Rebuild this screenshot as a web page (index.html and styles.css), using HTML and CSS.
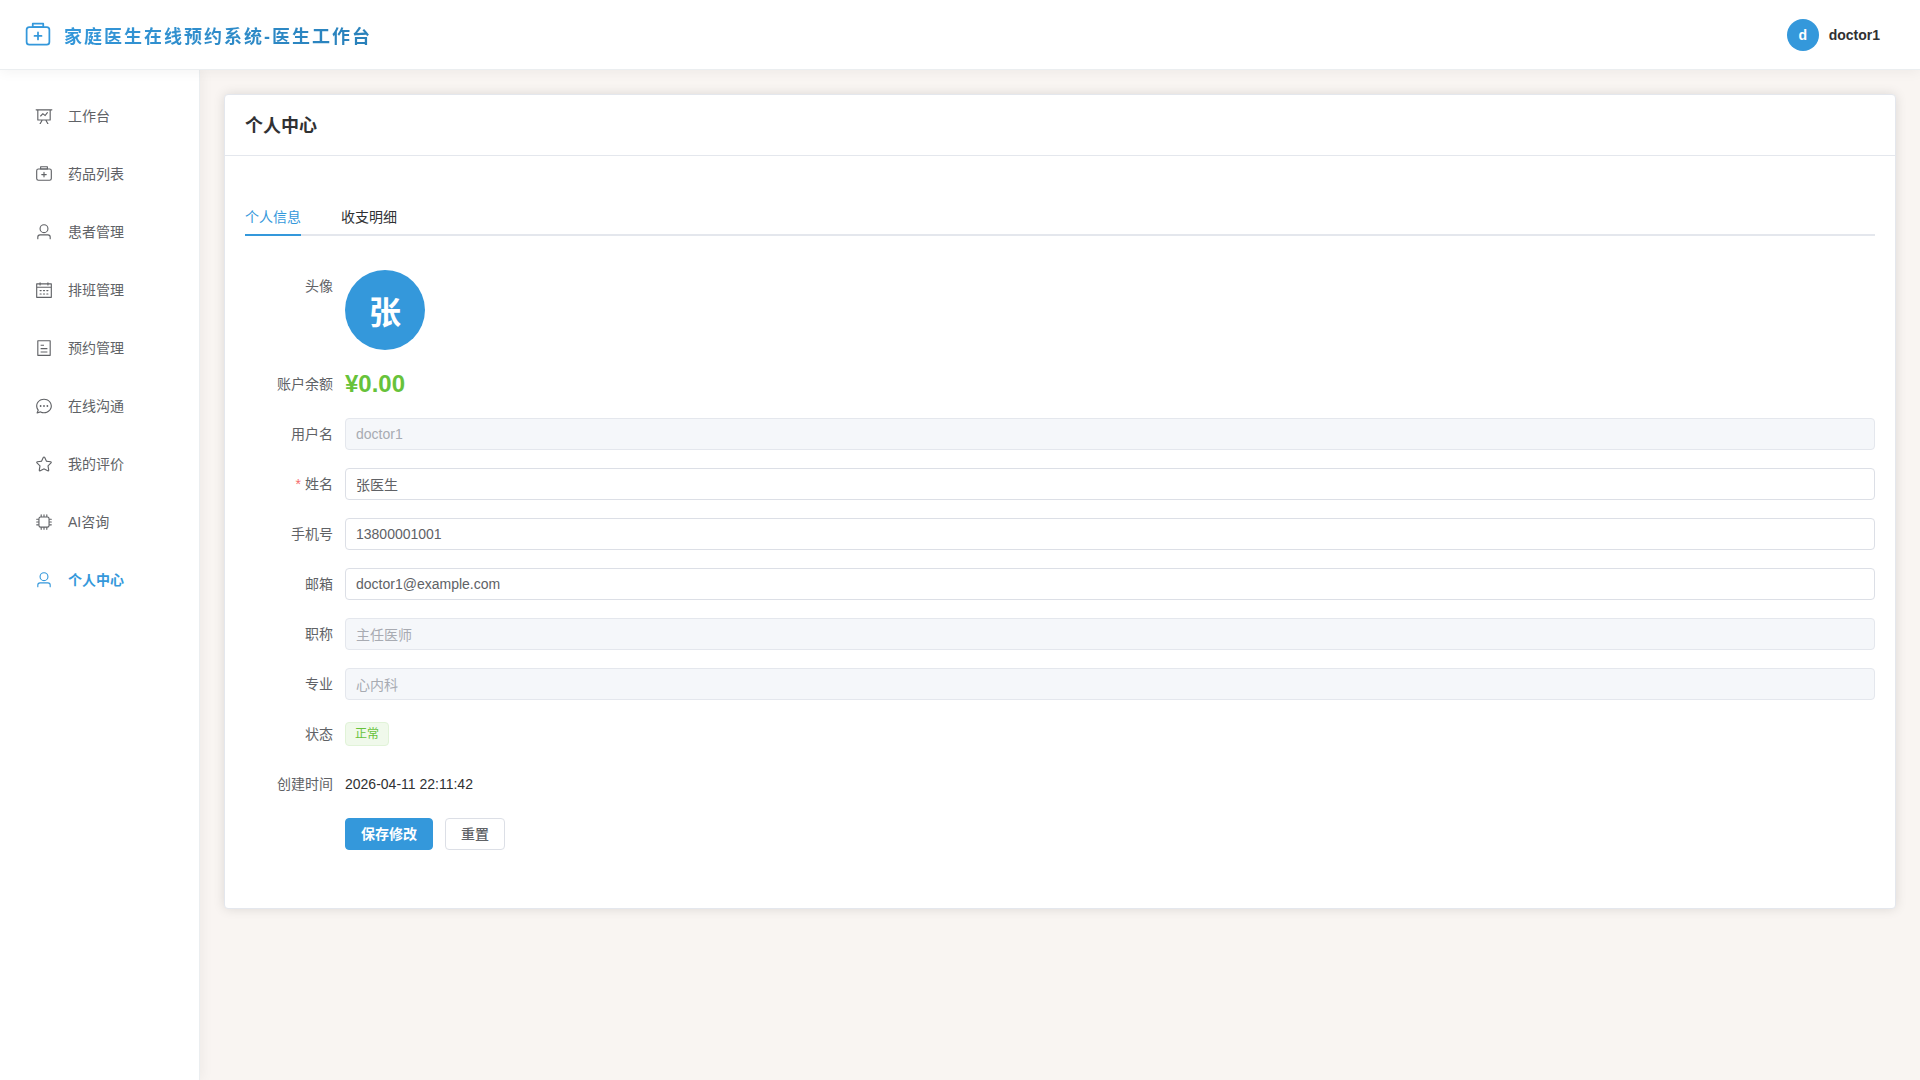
FILE: index.html
```html
<!DOCTYPE html>
<html lang="zh-CN">
<head>
<meta charset="utf-8">
<meta name="viewport" content="width=device-width, initial-scale=1">
<title>家庭医生在线预约系统-医生工作台</title>
<link rel="stylesheet" href="styles.css">
</head>
<body>
<svg class="sprite" aria-hidden="true">
  <symbol id="kit" viewBox="0 0 1024 1024"><path d="M192 256a64 64 0 0 0-64 64v448a64 64 0 0 0 64 64h640a64 64 0 0 0 64-64V320a64 64 0 0 0-64-64zm0-64h640a128 128 0 0 1 128 128v448a128 128 0 0 1-128 128H192A128 128 0 0 1 64 768V320a128 128 0 0 1 128-128"/><path d="M544 512h96a32 32 0 0 1 0 64h-96v96a32 32 0 0 1-64 0v-96h-96a32 32 0 0 1 0-64h96v-96a32 32 0 0 1 64 0zM352 128v64h320v-64zm-32-64h384a32 32 0 0 1 32 32v128a32 32 0 0 1-32 32H320a32 32 0 0 1-32-32V96a32 32 0 0 1 32-32"/></symbol>
  <symbol id="board" viewBox="0 0 1024 1024"><path d="M359.168 768H160a32 32 0 0 1-32-32V192H64a32 32 0 0 1 0-64h896a32 32 0 1 1 0 64h-64v544a32 32 0 0 1-32 32H665.216l110.848 192h-73.856L591.36 768H433.024L322.176 960H248.32zM832 192H192v512h640zM342.656 534.656a32 32 0 1 1-45.312-45.312L444.992 341.76l125.44 94.08L679.04 300.032a32 32 0 1 1 49.92 39.936L581.632 524.224 451.008 426.24 342.656 534.592z"/></symbol>
  <symbol id="user" viewBox="0 0 1024 1024"><path d="M512 512a192 192 0 1 0 0-384 192 192 0 0 0 0 384m0 64a256 256 0 1 1 0-512 256 256 0 0 1 0 512m320 320v-96a96 96 0 0 0-96-96H288a96 96 0 0 0-96 96v96a32 32 0 1 1-64 0v-96a160 160 0 0 1 160-160h448a160 160 0 0 1 160 160v96a32 32 0 1 1-64 0"/></symbol>
  <symbol id="calendar" viewBox="0 0 1024 1024"><path d="M128 384v512h768V192H768v32a32 32 0 1 1-64 0v-32H320v32a32 32 0 0 1-64 0v-32H128v128h768v64zm192-256h384V96a32 32 0 1 1 64 0v32h160a32 32 0 0 1 32 32v768a32 32 0 0 1-32 32H96a32 32 0 0 1-32-32V160a32 32 0 0 1 32-32h160V96a32 32 0 0 1 64 0zm-32 384h64a32 32 0 0 1 0 64h-64a32 32 0 0 1 0-64m0 192h64a32 32 0 1 1 0 64h-64a32 32 0 1 1 0-64m192-192h64a32 32 0 0 1 0 64h-64a32 32 0 0 1 0-64m0 192h64a32 32 0 1 1 0 64h-64a32 32 0 1 1 0-64m192-192h64a32 32 0 1 1 0 64h-64a32 32 0 1 1 0-64m0 192h64a32 32 0 1 1 0 64h-64a32 32 0 1 1 0-64"/></symbol>
  <symbol id="ticket" viewBox="0 0 1024 1024"><path d="M192 128v768h640V128zm-32-64h704a32 32 0 0 1 32 32v832a32 32 0 0 1-32 32H160a32 32 0 0 1-32-32V96a32 32 0 0 1 32-32m160 448h384v64H320zm0-192h192v64H320zm0 384h384v64H320z"/></symbol>
  <symbol id="chat" viewBox="0 0 1024 1024"><path d="m174.72 855.68 135.296-45.12 23.68 11.84C388.096 849.536 448.576 864 512 864c211.84 0 384-166.784 384-352S723.84 160 512 160 128 326.784 128 512c0 69.12 24.96 139.264 70.848 199.232l22.08 28.8-46.272 115.584zm-45.248 82.56A32 32 0 0 1 89.6 896l58.368-145.92C94.72 680.32 64 596.864 64 512 64 299.904 256 96 512 96s448 203.904 448 416-192 416-448 416a461.06 461.06 0 0 1-206.912-48.384l-175.616 58.56z"/><path d="M512 563.2a51.2 51.2 0 1 1 0-102.4 51.2 51.2 0 0 1 0 102.4m192 0a51.2 51.2 0 1 1 0-102.4 51.2 51.2 0 0 1 0 102.4m-384 0a51.2 51.2 0 1 1 0-102.4 51.2 51.2 0 0 1 0 102.4"/></symbol>
  <symbol id="star" viewBox="0 0 1024 1024"><path d="m512 747.84 228.16 119.936a6.4 6.4 0 0 0 9.28-6.72l-43.52-254.08 184.512-179.904a6.4 6.4 0 0 0-3.52-10.88l-255.104-37.12L517.76 147.904a6.4 6.4 0 0 0-11.52 0L392.192 379.072l-255.104 37.12a6.4 6.4 0 0 0-3.52 10.88L318.08 606.976l-43.584 254.08a6.4 6.4 0 0 0 9.28 6.72zM313.6 924.48a70.4 70.4 0 0 1-102.144-74.24l37.888-220.928L88.96 472.96A70.4 70.4 0 0 1 128 352.896l221.76-32.256 99.2-200.96a70.4 70.4 0 0 1 126.208 0l99.2 200.96 221.824 32.256a70.4 70.4 0 0 1 39.04 120.064L774.72 629.376l37.888 220.928a70.4 70.4 0 0 1-102.144 74.24L512 820.096l-198.4 104.32z"/></symbol>
  <symbol id="cpu" viewBox="0 0 1024 1024"><path d="M320 256a64 64 0 0 0-64 64v384a64 64 0 0 0 64 64h384a64 64 0 0 0 64-64V320a64 64 0 0 0-64-64zm0-64h384a128 128 0 0 1 128 128v384a128 128 0 0 1-128 128H320a128 128 0 0 1-128-128V320a128 128 0 0 1 128-128"/><path fill="none" stroke="currentColor" stroke-width="64" stroke-linecap="round" d="M512 96v96M352 96v96M672 96v96M512 928v-96M352 928v-96M672 928v-96M96 512h96M96 352h96M96 672h96M928 512h-96M928 352h-96M928 672h-96"/></symbol>
</svg>

<header class="topbar">
  <div class="brand">
    <svg class="brand-icon" aria-hidden="true"><use href="#kit"/></svg>
    <span class="brand-name">家庭医生在线预约系统-医生工作台</span>
  </div>
  <button class="account" type="button">
    <span class="avatar avatar-small">d</span>
    <span>doctor1</span>
  </button>
</header>

<div class="shell">
  <nav class="sidebar">
    <a class="nav-item" href="#"><svg class="nav-icon" aria-hidden="true"><use href="#board"/></svg>工作台</a>
    <a class="nav-item" href="#"><svg class="nav-icon" aria-hidden="true"><use href="#kit"/></svg>药品列表</a>
    <a class="nav-item" href="#"><svg class="nav-icon" aria-hidden="true"><use href="#user"/></svg>患者管理</a>
    <a class="nav-item" href="#"><svg class="nav-icon" aria-hidden="true"><use href="#calendar"/></svg>排班管理</a>
    <a class="nav-item" href="#"><svg class="nav-icon" aria-hidden="true"><use href="#ticket"/></svg>预约管理</a>
    <a class="nav-item" href="#"><svg class="nav-icon" aria-hidden="true"><use href="#chat"/></svg>在线沟通</a>
    <a class="nav-item" href="#"><svg class="nav-icon" aria-hidden="true"><use href="#star"/></svg>我的评价</a>
    <a class="nav-item" href="#"><svg class="nav-icon" aria-hidden="true"><use href="#cpu"/></svg>AI咨询</a>
    <a class="nav-item is-active" href="#" aria-current="page"><svg class="nav-icon" aria-hidden="true"><use href="#user"/></svg>个人中心</a>
  </nav>

  <main class="content">
    <section class="card">
      <h1 class="card-title">个人中心</h1>
      <div class="card-body">
        <div class="tabs" role="tablist">
          <button class="tab is-active" type="button" role="tab" aria-selected="true">个人信息</button>
          <button class="tab" type="button" role="tab" aria-selected="false">收支明细</button>
        </div>
        <form class="form">
          <div class="row">
            <span class="label">头像</span>
            <span class="avatar avatar-large">张</span>
          </div>
          <div class="row">
            <span class="label">账户余额</span>
            <strong class="balance">¥0.00</strong>
          </div>
          <div class="row">
            <label class="label" for="username">用户名</label>
            <input class="field" id="username" type="text" value="doctor1" disabled>
          </div>
          <div class="row">
            <label class="label is-required" for="name">姓名</label>
            <input class="field" id="name" type="text" value="张医生" required>
          </div>
          <div class="row">
            <label class="label" for="phone">手机号</label>
            <input class="field" id="phone" type="tel" value="13800001001">
          </div>
          <div class="row">
            <label class="label" for="email">邮箱</label>
            <input class="field" id="email" type="email" value="doctor1@example.com">
          </div>
          <div class="row">
            <label class="label" for="title">职称</label>
            <input class="field" id="title" type="text" value="主任医师" disabled>
          </div>
          <div class="row">
            <label class="label" for="major">专业</label>
            <input class="field" id="major" type="text" value="心内科" disabled>
          </div>
          <div class="row">
            <span class="label">状态</span>
            <span class="tag">正常</span>
          </div>
          <div class="row">
            <span class="label">创建时间</span>
            <time class="created" datetime="2026-04-11T22:11:42">2026-04-11 22:11:42</time>
          </div>
          <div class="row actions">
            <button class="btn btn-primary" type="submit">保存修改</button>
            <button class="btn" type="reset">重置</button>
          </div>
        </form>
      </div>
    </section>
  </main>
</div>
</body>
</html>
```

FILE: styles.css
```css
*, *::before, *::after { box-sizing: border-box; }

body {
  margin: 0;
  min-height: 100vh;
  display: flex;
  flex-direction: column;
  background: #f9f5f2;
  color: #303133;
  font-family: "Liberation Sans", "Noto Sans CJK SC", sans-serif;
  font-size: 14px;
  line-height: 20px;
}

button, input { font: inherit; color: inherit; }
button { cursor: pointer; }
svg { fill: currentColor; }

.sprite { display: none; }

/* Top bar */
.topbar {
  position: relative;
  z-index: 2;
  display: flex;
  align-items: center;
  justify-content: space-between;
  height: 70px;
  padding: 0 24px;
  background: #fff;
  border-bottom: 1px solid #ebeef0;
  box-shadow: 0 2px 12px rgba(0, 0, 0, 0.05);
}
.brand {
  display: flex;
  align-items: center;
  gap: 12px;
  color: #3498db;
}
.brand-icon { width: 28px; height: 28px; }
.brand-name {
  font-size: 18px;
  font-weight: 700;
  line-height: normal;
  letter-spacing: 2px;
  background: linear-gradient(135deg, #3498db, #2980b9);
  background-clip: text;
  -webkit-background-clip: text;
  color: transparent;
}
.account {
  display: flex;
  align-items: center;
  gap: 10px;
  padding: 0 16px;
  border: 0;
  background: none;
  font-weight: 700;
}
.avatar {
  display: flex;
  align-items: center;
  justify-content: center;
  border-radius: 50%;
  background: #3498db;
  color: #fff;
  font-weight: 700;
}
.avatar-small { width: 32px; height: 32px; }
.avatar-large { width: 80px; height: 80px; font-size: 32px; line-height: normal; }

.shell { display: flex; flex: 1; }

/* Side navigation */
.sidebar {
  z-index: 1;
  display: flex;
  flex-direction: column;
  flex: 0 0 200px;
  gap: 8px;
  padding: 21px 12px;
  background: #fff;
  border-right: 1px solid #ebeef0;
  box-shadow: 2px 0 12px rgba(0, 0, 0, 0.05);
}
.nav-item {
  display: flex;
  align-items: center;
  gap: 15px;
  height: 50px;
  padding: 0 23px;
  color: #606266;
  text-decoration: none;
}
.nav-icon { width: 18px; height: 18px; }
.nav-item.is-active { color: #3498db; font-weight: 700; }

/* Profile card */
.content { flex: 1; min-width: 0; padding: 24px; }
.card {
  background: #fff;
  border: 1px solid #e4e7ed;
  border-radius: 4px;
  box-shadow: 0 0 12px rgba(0, 0, 0, 0.12);
}
.card-title {
  margin: 0;
  padding: 19px 20px 17px;
  border-bottom: 1px solid #e4e7ed;
  font-size: 18px;
  line-height: 24px;
}
.card-body { padding: 40px 20px; }

.tabs {
  display: flex;
  gap: 40px;
  margin-bottom: 34px;
  box-shadow: inset 0 -2px #e4e7ed;
}
.tab {
  height: 40px;
  padding: 0;
  border: 0;
  background: none;
  line-height: normal;
}
.tab.is-active { color: #3498db; box-shadow: inset 0 -2px #3498db; }

.form { display: flex; flex-direction: column; gap: 18px; margin-bottom: 18px; }
.row { display: flex; align-items: center; min-height: 32px; }
.label {
  flex: 0 0 100px;
  align-self: flex-start;
  padding-right: 12px;
  color: #606266;
  line-height: 32px;
  text-align: right;
}
.label.is-required::before { content: "*"; margin-right: 4px; color: #f56c6c; }
.balance { color: #67c23a; font-size: 24px; line-height: 32px; }
.field {
  flex: 1;
  min-width: 0;
  height: 32px;
  padding: 0 10px;
  border: 1px solid #dcdfe6;
  border-radius: 4px;
  background: #fff;
  color: #606266;
  line-height: 30px;
}
.field:disabled { background: #f5f7fa; border-color: #e4e7ed; color: #a8abb2; }
.tag {
  padding: 0 9px;
  border: 1px solid #e1f3d8;
  border-radius: 4px;
  background: #f0f9eb;
  color: #67c23a;
  font-size: 12px;
  line-height: 22px;
}
.actions { gap: 12px; padding-left: 100px; }
.btn {
  height: 32px;
  padding: 0 15px;
  border: 1px solid #dcdfe6;
  border-radius: 4px;
  background: #fff;
  color: #606266;
  font-weight: 500;
}
.btn-primary { border-color: #3498db; background: #3498db; color: #fff; font-weight: 700; }
```
